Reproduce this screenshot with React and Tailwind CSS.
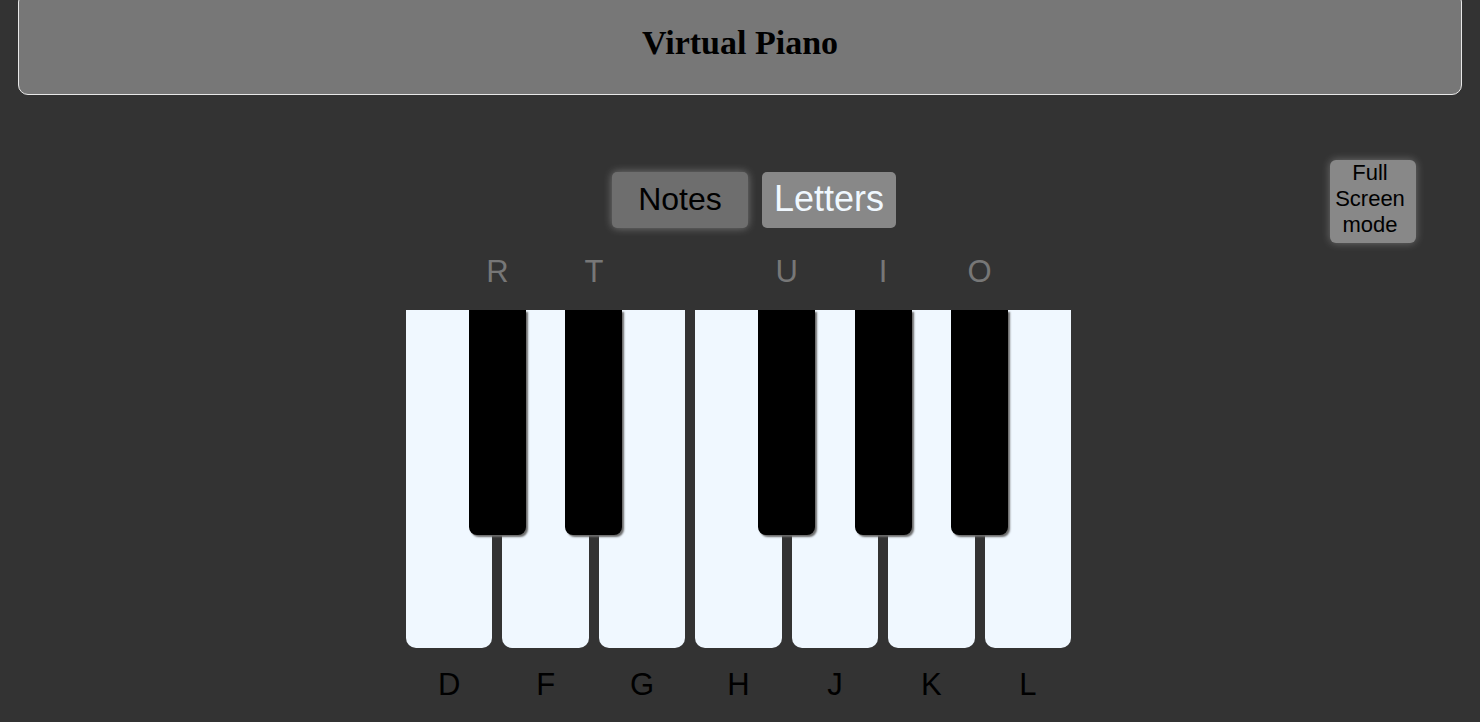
import React from "react";

const whites = ["D", "F", "G", "H", "J", "K", "L"];
const blacks = ["R", "T", "", "U", "I", "O"];

export default function App() {
  return (
    <div
      className="min-h-screen w-full overflow-hidden bg-[#333333]"
      style={{ fontFamily: '"Liberation Sans", Arial, sans-serif' }}
    >
      <div className="mx-[18px] -mt-[8px] flex h-[103px] items-center justify-center rounded-[10px] border border-[#e8e8e8] bg-[#777777] pb-[2px]">
        <h1
          className="text-[34px] font-bold leading-none text-black"
          style={{ fontFamily: '"Liberation Serif", "Times New Roman", serif' }}
        >
          Virtual Piano
        </h1>
      </div>

      <div className="mt-[65px] grid h-[83px] grid-cols-[1fr_auto_1fr]">
        <div />
        <div className="flex items-start gap-[14px] pl-[28px] pt-[12px]">
          <button className="flex h-[56px] w-[136px] items-center justify-center rounded-[5px] bg-[#6e6e6e] pb-[3px] text-[32px] leading-none text-black shadow-[0_0_8px_rgba(255,255,255,0.35)]">
            Notes
          </button>
          <button className="flex h-[56px] w-[134px] items-center justify-center rounded-[5px] bg-[#888888] pb-[2px] text-[36px] leading-none text-[#f0f8ff]">
            Letters
          </button>
        </div>
        <div className="flex justify-end pr-[64px]">
          <button className="flex h-[83px] w-[86px] flex-col items-center justify-center rounded-[6px] bg-[#888888] pb-[5px] pr-[6px] text-[22px] leading-[26px] text-black shadow-[0_0_8px_rgba(255,255,255,0.3)]">
            <span>Full</span>
            <span>Screen</span>
            <span>mode</span>
          </button>
        </div>
      </div>

      <div className="flex justify-center pr-[3px]">
        <div className="w-[675px]">
          <div className="mt-[11px] grid h-[36px] grid-cols-6 px-[48.2px] text-[31px] leading-[36px] text-[#777777]">
            {blacks.map((b, i) => (
              <div key={i} className="text-center">
                {b}
              </div>
            ))}
          </div>

          <div className="relative mt-[20px] grid h-[338px] grid-cols-7">
            {whites.map((w) => (
              <div key={w} className="mx-[5px] rounded-b-[10px] bg-[#f0f8ff]" />
            ))}
            <div className="absolute inset-x-0 top-0 grid grid-cols-6 px-[48.2px]">
              {blacks.map((b, i) => (
                <div key={i} className="flex justify-center">
                  {b && (
                    <div className="h-[225px] w-[57px] rounded-b-[8px] bg-black shadow-[2px_2px_2px_#6a6a6a]" />
                  )}
                </div>
              ))}
            </div>
          </div>

          <div className="mt-[19px] grid grid-cols-7 text-[31px] leading-[36px] text-black">
            {whites.map((w) => (
              <div key={w} className="text-center">
                {w}
              </div>
            ))}
          </div>
        </div>
      </div>
    </div>
  );
}
